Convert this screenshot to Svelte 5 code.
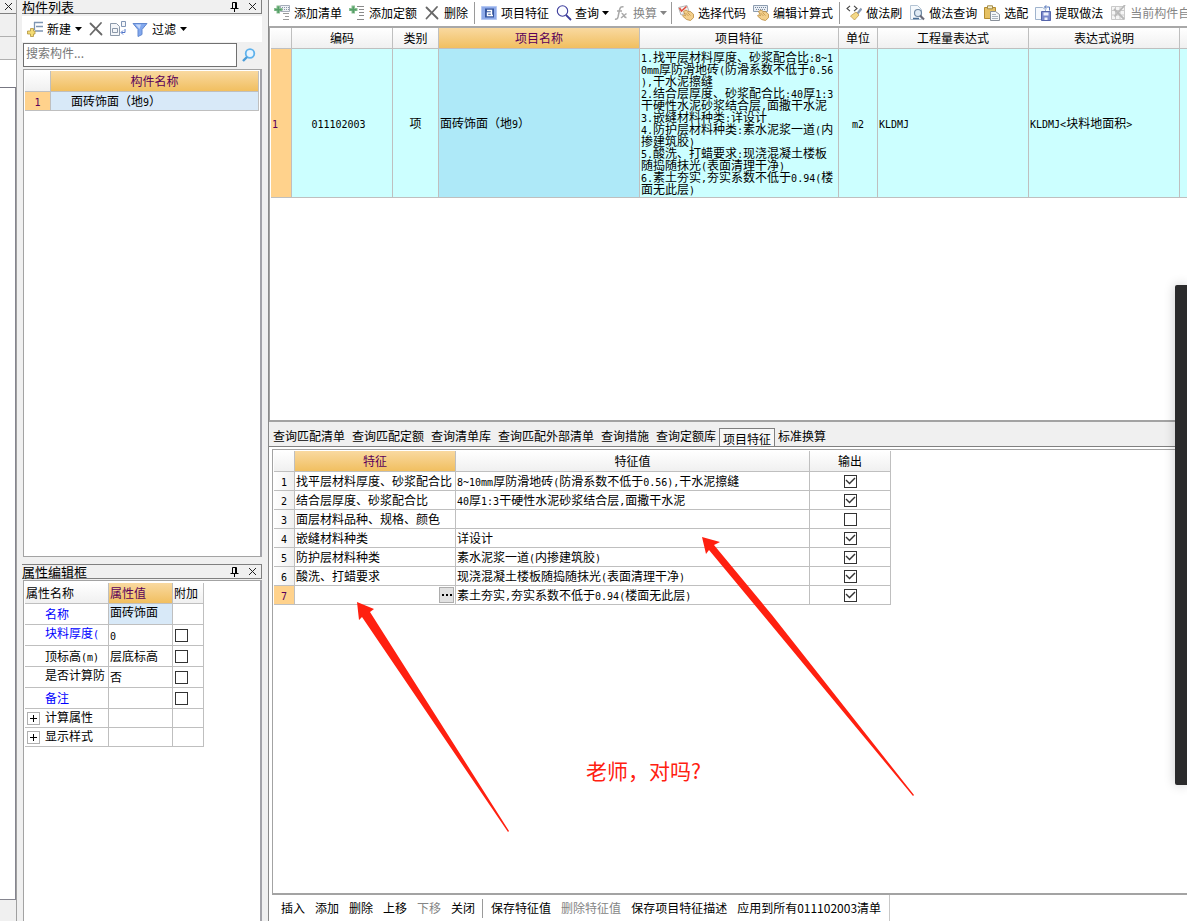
<script>
  const tools = [
    { icon: 'addList', label: '添加清单' },
    { icon: 'addQuota', label: '添加定额' },
    { icon: 'cross', label: '删除' },
    { sep: true },
    { icon: 'feature', label: '项目特征' },
    { icon: 'search', label: '查询', drop: true },
    { icon: 'fx', label: '换算', drop: true, off: true },
    { sep: true },
    { icon: 'pickCode', label: '选择代码' },
    { icon: 'editCalc', label: '编辑计算式' },
    { sep: true },
    { icon: 'brush', label: '做法刷' },
    { icon: 'docFind', label: '做法查询' },
    { icon: 'paste', label: '选配' },
    { icon: 'extract', label: '提取做法' },
    { icon: 'gridOff', label: '当前构件自动套做法', off: true }
  ];

  const detail = `1.找平层材料厚度、砂浆配合比:8~1
0mm厚防滑地砖(防滑系数不低于0.56
),干水泥擦缝
2.结合层厚度、砂浆配合比:40厚1:3
干硬性水泥砂浆结合层,面撒干水泥
3.嵌缝材料种类:详设计
4.防护层材料种类:素水泥浆一道(内
掺建筑胶)
5.酸洗、打蜡要求:现浇混凝土楼板
随捣随抹光(表面清理干净)
6.素土夯实,夯实系数不低于0.94(楼
面无此层)`;

  let props = $state([
    { name: '名称', value: '面砖饰面', key: true, topValue: true, picked: true },
    { name: '块料厚度(', value: '0', key: true, topName: true, extra: false },
    { name: '顶标高(m)', value: '层底标高', extra: false },
    { name: '是否计算防', value: '否', topName: true, extra: false },
    { name: '备注', value: '', key: true, extra: false },
    { name: '计算属性', value: '', group: true },
    { name: '显示样式', value: '', group: true }
  ]);

  const tabs = ['查询匹配清单', '查询匹配定额', '查询清单库', '查询匹配外部清单', '查询措施', '查询定额库', '项目特征', '标准换算'];
  let activeTab = $state('项目特征');

  let traits = $state([
    { name: '找平层材料厚度、砂浆配合比', value: '8~10mm厚防滑地砖(防滑系数不低于0.56),干水泥擦缝', out: true },
    { name: '结合层厚度、砂浆配合比', value: '40厚1:3干硬性水泥砂浆结合层,面撒干水泥', out: true },
    { name: '面层材料品种、规格、颜色', value: '', out: false },
    { name: '嵌缝材料种类', value: '详设计', out: true },
    { name: '防护层材料种类', value: '素水泥浆一道(内掺建筑胶)', out: true },
    { name: '酸洗、打蜡要求', value: '现浇混凝土楼板随捣随抹光(表面清理干净)', out: true },
    { name: '', value: '素土夯实,夯实系数不低于0.94(楼面无此层)', out: true }
  ]);
  let current = $state(6);

  const actions = [
    { label: '插入' },
    { label: '添加' },
    { label: '删除' },
    { label: '上移' },
    { label: '下移', off: true },
    { label: '关闭' },
    { sep: true },
    { label: '保存特征值' },
    { label: '删除特征值', off: true },
    { label: '保存项目特征描述' },
    { label: '应用到所有011102003清单' }
  ];

  // Latin runs take half the width of a Han character.
  const runs = (text) => text.split(/([\x20-\x7e]+)/).filter(Boolean);
  const isLatin = (run) => /^[\x20-\x7e]/.test(run);
</script>

{#snippet grid(text)}{#each runs(text) as run}{#if isLatin(run)}<span class="half">{run}</span>{:else}{run}{/if}{/each}{/snippet}

{#snippet closeMark()}
  <svg width="9" height="9" viewBox="0 0 9 9" aria-hidden="true"><path d="M1 1l7 7M8 1l-7 7" stroke="#222" fill="none" /></svg>
{/snippet}

{#snippet dockTitle(text)}
  <header class="dock-title">
    <h2>{text}</h2>
    <button aria-label="固定"><svg width="9" height="10" viewBox="0 0 9 10"><path d="M2.500 6V.5h4V6M.5 6.500h8M4.500 6.500V10" stroke="#000" fill="none" /><path d="M5 1h1.500v5H5z" /></svg></button>
    <button aria-label="关闭">{@render closeMark()}</button>
  </header>
{/snippet}

{#snippet hand()}
  <path d="M5.500 6.500l2.500-1.500 3 2 1-.8 3.500 3v3.500L12.500 15.500l-4-1L4.500 11l1-1.200 2 .8z" fill="#f3cf8b" stroke="#b98a3e" stroke-width=".8" />
  <path d="M7.500 8l3 3M9.500 7.500l3 3" stroke="#b98a3e" stroke-width=".7" />
{/snippet}

{#snippet icon(name)}
  <svg class="icon" width="16" height="16" viewBox="0 0 16 16" fill="none" aria-hidden="true">
    {#if name === 'addList'}
      <path d="M6.500.5h9v6h-9z" fill="#eef1f6" stroke="#a5adba" />
      <path d="M8 2.500h7M8 4.500h7" stroke="#8c97a8" stroke-dasharray="1 1" />
      <path d="M9 8.500h6M11 11.500h4M9 14.500h6" stroke="#9a9a9a" />
      <path d="M2.500.5H6V3h2.500v3H6v2.500H2.500V6H0V3h2.500z" fill="#8bbf93" />
      <path d="M3.500 1.500H5V4h2.500v1.500H5V8H3.500V5.500H1V4h2.500z" fill="#55a068" />
    {:else if name === 'addQuota'}
      <path d="M8 1.500h7M10 4.500h5M10 7.500h5M10 10.500h5M8 14.500h7" stroke="#8a8a8a" />
      <path d="M2.500.5H6V3h2.500v3H6v2.500H2.500V6H0V3h2.500z" fill="#8bbf93" />
      <path d="M3.500 1.500H5V4h2.500v1.500H5V8H3.500V5.500H1V4h2.500z" fill="#55a068" />
    {:else if name === 'cross'}
      <path d="M2.500 2.500L13.500 13.500M13 2L2.500 13.500" stroke="#686868" stroke-width="1.800" stroke-linecap="round" />
    {:else if name === 'feature'}
      <path d="M.5 1.500h15v13H.5z" fill="#8fabe9" stroke="#b5c8f3" />
      <path d="M4 3.500h9v9H4z" fill="#34559f" />
      <path d="M6 5.500h4.500v5H6.500v-2.500h4M10.500 10.500H12" stroke="#fff" stroke-width="1.400" />
    {:else if name === 'search'}
      <circle cx="6.500" cy="6" r="5.200" fill="#fbfcff" stroke="#3c3c9c" stroke-width="1.100" />
      <path d="M10 10l5 5" stroke="#3c3c9c" stroke-width="1.800" />
    {:else if name === 'fx'}
      <path d="M9.500 2C7.500 1 6 2.500 5.500 5L4 12c-.5 2-1.500 2.500-3 2M3 6h5M7.500 8.500c2-1 2 4.500 5 4M12.500 8.500L7 13" stroke="#a9a9a9" stroke-width="1.500" />
    {:else if name === 'pickCode'}
      <path d="M.5 2.500L9 .5l2 6-8 3.500z" fill="#f4f4f4" stroke="#b5b5b5" />
      <path d="M1.500 3l2 3 5-4.500" stroke="#e04a3a" stroke-width="1.500" />
      {@render hand()}
    {:else if name === 'editCalc'}
      <path d="M.5.5h14v6H.5z" fill="#e9eef5" stroke="#8d9db0" />
      <path d="M2 2.500h11M3 4.500h10" stroke="#74869c" stroke-dasharray="1 1" />
      {@render hand()}
    {:else if name === 'brush'}
      <path d="M4 .8L1 3.500l3 2.700M8 .8l3 2.700-3 2.700" stroke="#444" stroke-width="1.100" />
      <path d="M15.500 3.500L11.500 8.500" stroke="#8a9bb5" stroke-width="2.200" />
      <path d="M10 7l3 3-4.500 5L4.500 11z" fill="#f3d888" stroke="#c39b49" stroke-width=".8" />
    {:else if name === 'docFind'}
      <path d="M1.500.5h7l4 4v10h-11z" fill="#f5f9fd" stroke="#b4c4d4" />
      <circle cx="9" cy="8" r="3.500" fill="#e0ebf5" stroke="#6d87a2" stroke-width="1.200" />
      <path d="M11 10.500l4 4" stroke="#6a6a78" stroke-width="2.200" />
      <path d="M4 13.500h6" stroke="#4a6f96" stroke-width="1.500" />
    {:else if name === 'paste'}
      <path d="M.5 2.500h11v11H.5z" fill="#e6c163" stroke="#b48d32" />
      <path d="M3.500.8h5v3h-5z" fill="#f6efcf" stroke="#a18a48" />
      <path d="M6.500 6.500h5l4 3v6h-9z" fill="#f5f7fa" stroke="#89909a" />
      <path d="M8 9.500h4M8 11.500h6M8 13.500h6" stroke="#a9b2bd" />
    {:else if name === 'extract'}
      <path d="M.5 2.500h7l3 2v10H.5z" fill="#f6f9fd" stroke="#9fb3cd" />
      <path d="M9.500 2h5v3.500M11.500.2L9.500 2l2 1.800" stroke="#5577bb" />
      <path d="M6.500 6.500h9v9h-9z" fill="#7a89cc" stroke="#5565ab" />
      <path d="M8.500 7.500h5v3h-5zM9.500 12.500h3V15h-3z" fill="#eef1fb" />
    {:else if name === 'gridOff'}
      <path d="M1.500 1.500h13v13h-13zM1.500 5.500h13M1.500 10h13M5.500 1.500v13M10 1.500v13" fill="#f5f5f5" stroke="#cacaca" />
      <path d="M4 4l10 10M15 0L4.500 11.500" stroke="#b8b8b8" stroke-width="1.800" />
    {:else if name === 'new'}
      <path d="M7 1.500h9M9 5.500h7M8 10h8M7.500 1v8" stroke="#7d95b3" stroke-width="1.300" />
      <path d="M3.500 7.500h3V10H8v3H6.500v2.500h-3V13H.5v-3h3z" fill="#f4dc74" stroke="#b1933c" stroke-width=".8" />
    {:else if name === 'copy'}
      <path d="M.5 2.500h6l3 3v9h-9z" fill="#f4f6f9" stroke="#8c99aa" />
      <path d="M2.500 7.500h5v4h-5z" stroke="#8c99aa" />
      <path d="M11.500.5h4v5h-4z" fill="#f4f6f9" stroke="#8195b5" />
      <path d="M15 8v3.500h-3.500M13 9.500l-2 2 2 2" stroke="#4f74c9" />
    {:else if name === 'filter'}
      <path d="M1 2.500h14L10 8.500v5l-4 2v-7z" fill="#82a8ee" stroke="#6288cf" />
      <path d="M3.500 3.500H9L7.500 8z" fill="#c6d9fb" />
    {/if}
  </svg>
{/snippet}

{#snippet caret()}
  <svg class="caret" width="7" height="4" viewBox="0 0 7 4" aria-hidden="true"><path d="M0 0h7L3.500 4z" fill="currentColor" /></svg>
{/snippet}

<div class="shell">
  <aside class="edge">
    <div class="edge-head"><button aria-label="关闭">{@render closeMark()}</button></div>
    <div class="edge-row"></div>
    <div class="edge-row"></div>
    <div class="edge-row blank"></div>
    <div class="edge-body"></div>
    <div class="edge-foot"></div>
  </aside>

  <div class="dock">
    <section class="parts">
      {@render dockTitle('构件列表')}
      <div class="part-tools">
        <button>{@render icon('new')}新建{@render caret()}</button>
        <button aria-label="删除">{@render icon('cross')}</button>
        <button aria-label="复制">{@render icon('copy')}</button>
        <button>{@render icon('filter')}过滤{@render caret()}</button>
      </div>
      <div class="search">
        <input type="text" placeholder="搜索构件..." aria-label="搜索构件" />
        <button aria-label="搜索">
          <svg width="14" height="14" viewBox="0 0 14 14" fill="none"><circle cx="8" cy="5.500" r="4.300" fill="#e8f5ff" stroke="#5fb2ec" stroke-width="1.800" /><path d="M5 9l-4 4" stroke="#4a9cd8" stroke-width="2.400" /></svg>
        </button>
      </div>
      <div class="pane">
        <table class="sheet part-table">
          <colgroup><col class="c-num" /><col /></colgroup>
          <thead><tr><th></th><th class="hot">构件名称</th></tr></thead>
          <tbody><tr><td class="num current">{@render grid('1')}</td><td class="part picked">{@render grid('面砖饰面（地9）')}</td></tr></tbody>
        </table>
      </div>
    </section>

    <section class="props">
      {@render dockTitle('属性编辑框')}
      <div class="pane">
        <table class="sheet prop-table">
          <colgroup><col class="c-name" /><col class="c-value" /><col class="c-extra" /></colgroup>
          <thead><tr><th>属性名称</th><th class="hot">属性值</th><th>附加</th></tr></thead>
          <tbody>
            {#each props as p}
              <tr class:group={p.group}>
                <td class="name" class:key={p.key} class:top={p.topName}>
                  {#if p.group}<button class="toggle" aria-label="展开{p.name}"><svg width="7" height="7" viewBox="0 0 7 7"><path d="M0 3.500h7M3.500 0v7" stroke="#000" /></svg></button>{/if}{@render grid(p.name)}
                </td>
                <td class:picked={p.picked} class:top={p.topValue}>{@render grid(p.value)}</td>
                <td class="extra">{#if p.extra !== undefined}<input type="checkbox" bind:checked={p.extra} aria-label="{p.name} 附加" />{/if}</td>
              </tr>
            {/each}
          </tbody>
        </table>
      </div>
    </section>
  </div>

  <main>
    <div class="toolbar">
      {#each tools as t}
        {#if t.sep}
          <span class="sep"></span>
        {:else}
          <button class:drop={t.drop} disabled={t.off}>{@render icon(t.icon)}{t.label}{#if t.drop}{@render caret()}{/if}</button>
        {/if}
      {/each}
    </div>

    <div class="pane bill">
      <table class="sheet bill-table">
        <colgroup>
          <col class="b-num" /><col class="b-code" /><col class="b-kind" /><col class="b-title" /><col class="b-detail" />
          <col class="b-unit" /><col class="b-expr" /><col class="b-expr" /><col />
        </colgroup>
        <thead>
          <tr>
            <th></th><th>编码</th><th>类别</th><th class="hot">项目名称</th><th>项目特征</th>
            <th>单位</th><th>工程量表达式</th><th>表达式说明</th><th></th>
          </tr>
        </thead>
        <tbody>
          <tr>
            <td class="current">{@render grid('1')}</td>
            <td class="code">{@render grid('011102003')}</td>
            <td class="mid">项</td>
            <td class="chosen">{@render grid('面砖饰面（地9）')}</td>
            <td class="detail">{@render grid(detail)}</td>
            <td class="mid">{@render grid('m2')}</td>
            <td>{@render grid('KLDMJ')}</td>
            <td>{@render grid('KLDMJ<块料地面积>')}</td>
            <td></td>
          </tr>
        </tbody>
      </table>
    </div>

    <div class="tabs" role="tablist">
      {#each tabs as tab}
        <button role="tab" aria-selected={tab === activeTab} onclick={() => (activeTab = tab)}>{tab}</button>
      {/each}
    </div>

    <div class="pane traits">
      <table class="sheet trait-table">
        <colgroup><col class="t-num" /><col class="t-name" /><col class="t-value" /><col class="t-out" /></colgroup>
        <thead><tr><th></th><th class="hot">特征</th><th>特征值</th><th>输出</th></tr></thead>
        <tbody>
          {#each traits as t, i}
            <tr onclick={() => (current = i)}>
              <td class="num" class:current={i === current}>{@render grid(String(i + 1))}</td>
              <td>
                {#if i === current}
                  <div class="edit-cell">{@render grid(t.name)}<button class="more" aria-label="编辑特征"><svg width="10" height="2" viewBox="0 0 10 2"><path d="M0 0h2v2H0zM4 0h2v2H4zM8 0h2v2H8z" /></svg></button></div>
                {:else}{@render grid(t.name)}{/if}
              </td>
              <td>{@render grid(t.value)}</td>
              <td class="mid"><input type="checkbox" bind:checked={t.out} aria-label="输出 {i + 1}" /></td>
            </tr>
          {/each}
        </tbody>
      </table>
    </div>

    <footer>
      {#each actions as a}
        {#if a.sep}<span class="sep"></span>{:else}<button disabled={a.off}>{a.label}</button>{/if}
      {/each}
    </footer>
  </main>

  <div class="side-window"></div>

  <svg class="arrows" width="1187" height="921" viewBox="0 0 1187 921" aria-hidden="true">
    <path d="M357 602L374 609L370 612L509 831L508 832L362 617L359 620Z" />
    <path d="M702 537L720 542L714 545L772 615L914 795L913 796L763 615L709 550L706 554Z" />
  </svg>
  <p class="note">老师，对吗?</p>
</div>

<style>
  :global(body) {
    margin: 0;
  }
  .shell {
    position: relative;
    display: flex;
    height: 100vh;
    overflow: hidden;
    background: #f0f0f0;
    color: #000;
    font: 12px/18px 'Noto Sans CJK SC', sans-serif;
  }
  .shell * {
    box-sizing: border-box;
  }
  button {
    display: inline-flex;
    align-items: center;
    flex: none;
    gap: 4px;
    padding: 0;
    border: 0;
    background: none;
    color: inherit;
    font: inherit;
    white-space: nowrap;
  }
  button:disabled {
    color: #858585;
  }
  svg {
    display: block;
    flex: none;
  }
  .half {
    font: 10px/0 'DejaVu Sans Mono', monospace;
  }

  /* strip at the window's edge */
  .edge {
    display: flex;
    flex: 0 0 17px;
    flex-direction: column;
    border-right: 1px solid #a0a0a0;
  }
  .edge-head {
    display: flex;
    flex: 0 0 14px;
    align-items: center;
    padding-left: 4px;
    border-bottom: 1px solid #808080;
  }
  .edge-row {
    flex: 0 0 23px;
    border-bottom: 1px solid #b0b0b0;
  }
  .edge-row.blank {
    flex-basis: 28px;
    border-bottom: 1px solid #777782;
    background: #fff;
  }
  .edge-body {
    flex: 1;
    border-right: 1px solid #85858f;
    border-bottom: 1px solid #85858f;
    background: #fff;
  }
  .edge-foot {
    flex: 0 0 21px;
  }

  /* docked panels */
  .dock {
    display: grid;
    flex: 0 0 240px;
    grid-template-rows: minmax(0, 557fr) minmax(0, 357fr);
    gap: 7px;
    margin: 0 6px 0 5px;
  }
  .parts,
  .props {
    display: flex;
    flex-direction: column;
    min-height: 0;
  }
  .dock-title {
    display: flex;
    flex: 0 0 14px;
    align-items: center;
    gap: 9px;
    margin-bottom: 2px;
    padding-right: 4px;
    border: solid #808080;
    border-width: 0 1px 1px 0;
  }
  .props .dock-title {
    flex-basis: 15px;
    border-top-width: 1px;
    margin-bottom: 1px;
  }
  .dock-title h2 {
    flex: 1;
    margin: 0;
    font: inherit;
    font-size: 13px;
    line-height: 13px;
  }
  .part-tools {
    display: flex;
    flex: 0 0 26px;
    align-items: center;
    gap: 6px;
    padding-left: 5px;
    background: #fff;
  }
  .search {
    display: flex;
    flex: 0 0 26px;
    margin-bottom: 1px;
    padding: 1px;
  }
  .search input {
    flex: 1;
    min-width: 0;
    padding: 0 2px 4px;
    border: 1px solid #707070;
    border-radius: 0;
    background: #fff;
    font: inherit;
  }
  .search input::placeholder {
    color: #777;
  }
  .search button {
    justify-content: center;
    width: 24px;
  }
  .pane {
    min-width: 0;
    min-height: 0;
    overflow: hidden;
    border: 1px solid #a3a3a3;
    background: #fff;
  }
  .dock .pane {
    flex: 1;
    margin-left: 1px;
    padding: 1px;
    border-right: 2px solid #a3a3a9;
  }
  .props .pane {
    border-bottom: 0;
    padding-top: 2px;
  }

  /* spreadsheets */
  .sheet {
    table-layout: fixed;
    border-spacing: 0;
    line-height: 12px;
  }
  th,
  td {
    padding: 0 1px;
    border: solid #bfbfbf;
    border-width: 0 1px 1px 0;
    overflow: hidden;
    text-align: left;
    white-space: nowrap;
    font-weight: 400;
  }
  th {
    height: 21px;
    background: linear-gradient(#fff, #f0f0f0);
    text-align: center;
  }
  th.hot {
    background: linear-gradient(#f9d9a0, #f1bf60);
    color: #5a005a;
  }
  .num {
    background: linear-gradient(90deg, #fff, #f0f0f0);
    text-align: center;
  }
  td.current {
    background: #ffd28c;
    color: #5a005a;
  }
  .mid {
    text-align: center;
  }
  .picked {
    background: #d8e9f8;
  }
  td.top {
    padding-top: 2px;
    vertical-align: top;
  }
  input[type='checkbox'] {
    display: block;
    width: 13px;
    height: 13px;
    margin: 0;
    border: 1px solid #333;
    border-radius: 0;
    background: #fff;
    appearance: none;
  }
  .mid input[type='checkbox'] {
    margin: 0 auto;
  }
  input[type='checkbox']:checked::before {
    display: block;
    width: 11px;
    height: 11px;
    background: #333;
    clip-path: polygon(1px 5px, 2px 4px, 5px 7px, 10px 2px, 11px 3px, 5px 9px);
    content: '';
  }

  .part-table {
    width: 100%;
  }
  .part-table td {
    height: 19px;
  }
  .part-table .part {
    padding-left: 20px;
  }
  .c-num {
    width: 26px;
  }
  .prop-table {
    width: 179px;
  }
  .prop-table th {
    text-align: left;
  }
  .prop-table td {
    height: 21px;
  }
  .prop-table .group td {
    height: 19px;
  }
  .c-name {
    width: 84px;
  }
  .c-value {
    width: 64px;
  }
  .c-extra {
    width: 31px;
  }
  .prop-table .name {
    padding-left: 20px;
  }
  .prop-table .key {
    color: #00f;
  }
  .prop-table .group .name {
    padding-left: 2px;
  }
  .prop-table .extra {
    padding-left: 2px;
  }
  .toggle {
    justify-content: center;
    width: 13px;
    height: 13px;
    margin-right: 5px;
    border: 1px solid #b0b0b0;
    vertical-align: middle;
  }

  /* main work area */
  main {
    display: grid;
    flex: 1;
    grid-template-rows: 26px minmax(0, 396fr) 25px minmax(0, 448fr) 26px;
    grid-template-columns: minmax(0, 1fr);
    min-width: 0;
    border-left: 1px solid #8a8a8a;
    background: #fff;
  }
  .toolbar {
    display: flex;
    align-items: center;
    gap: 7px;
    padding-left: 5px;
    overflow: hidden;
  }
  .toolbar .drop {
    gap: 3px;
    margin-right: -2px;
  }
  .sep {
    flex: none;
    width: 1px;
    height: 22px;
    background: #9a9a9a;
  }
  .toolbar .sep {
    margin: 0 -1px;
  }
  .bill {
    border-top: 2px solid #a8a8a8;
    border-right: 0;
    border-bottom: 2px solid #a3a3a3;
    padding-left: 1px;
  }
  .bill-table {
    width: 100%;
  }
  .bill-table th:last-child,
  .bill-table td:last-child {
    border-right: 0;
  }
  .bill-table td {
    height: 149px;
    background: #ccffff;
  }
  .bill-table td.current {
    background: #ffd28c;
  }
  .bill-table td.chosen {
    background: #aee9f8;
  }
  .bill-table .code {
    padding-right: 8px;
    text-align: center;
  }
  .bill-table .detail {
    white-space: pre;
  }
  .b-num {
    width: 21px;
  }
  .b-code {
    width: 101px;
  }
  .b-kind {
    width: 46px;
  }
  .b-title {
    width: 201px;
  }
  .b-detail {
    width: 199px;
  }
  .b-unit {
    width: 39px;
  }
  .b-expr {
    width: 151px;
  }

  .tabs {
    display: flex;
    align-items: flex-start;
    gap: 7px;
    padding: 5px 0 0 4px;
    overflow: hidden;
    border-bottom: 1px solid #808080;
    background: #f0f0f0;
  }
  .tabs button[aria-selected='true'] {
    height: 19px;
    margin: 1px -4px 0;
    padding: 1px 3px 0;
    border: 1px solid #808080;
    border-bottom: 0;
    background: #f8f8f8;
  }
  .traits {
    margin: 2px 0 0 3px;
    padding: 1px 1px 0;
    border-right: 0;
    border-bottom: 2px solid #a3a3a3;
  }
  .trait-table {
    width: 617px;
  }
  .trait-table td {
    height: 19px;
  }
  .t-num {
    width: 21px;
  }
  .t-name {
    width: 161px;
  }
  .t-value {
    width: 354px;
  }
  .t-out {
    width: 81px;
  }
  .edit-cell {
    display: flex;
    justify-content: flex-end;
  }
  .more {
    justify-content: center;
    width: 15px;
    height: 16px;
    border: 1px solid #adadad;
    background: #e1e1e1;
  }

  footer {
    display: flex;
    align-items: center;
    justify-self: start;
    gap: 10px;
    padding: 0 8px 0 12px;
    border-right: 1px solid #c8c8c8;
  }
  footer .sep {
    height: 19px;
    margin: 0 -2px 0 -3px;
  }

  /* layers over the work area */
  .side-window {
    position: absolute;
    top: 285px;
    right: 0;
    width: 12px;
    height: 500px;
    border-radius: 2px 0 0 2px;
    background: #2b2b2c;
    box-shadow: 0 0 12px rgb(0 0 0 / 20%);
  }
  .arrows {
    position: absolute;
    top: 0;
    left: 0;
    fill: #ff2010;
    pointer-events: none;
  }
  .note {
    position: absolute;
    top: 755px;
    left: 586px;
    margin: 0;
    color: #ff2010;
    font-size: 21px;
    line-height: 30px;
  }
</style>
